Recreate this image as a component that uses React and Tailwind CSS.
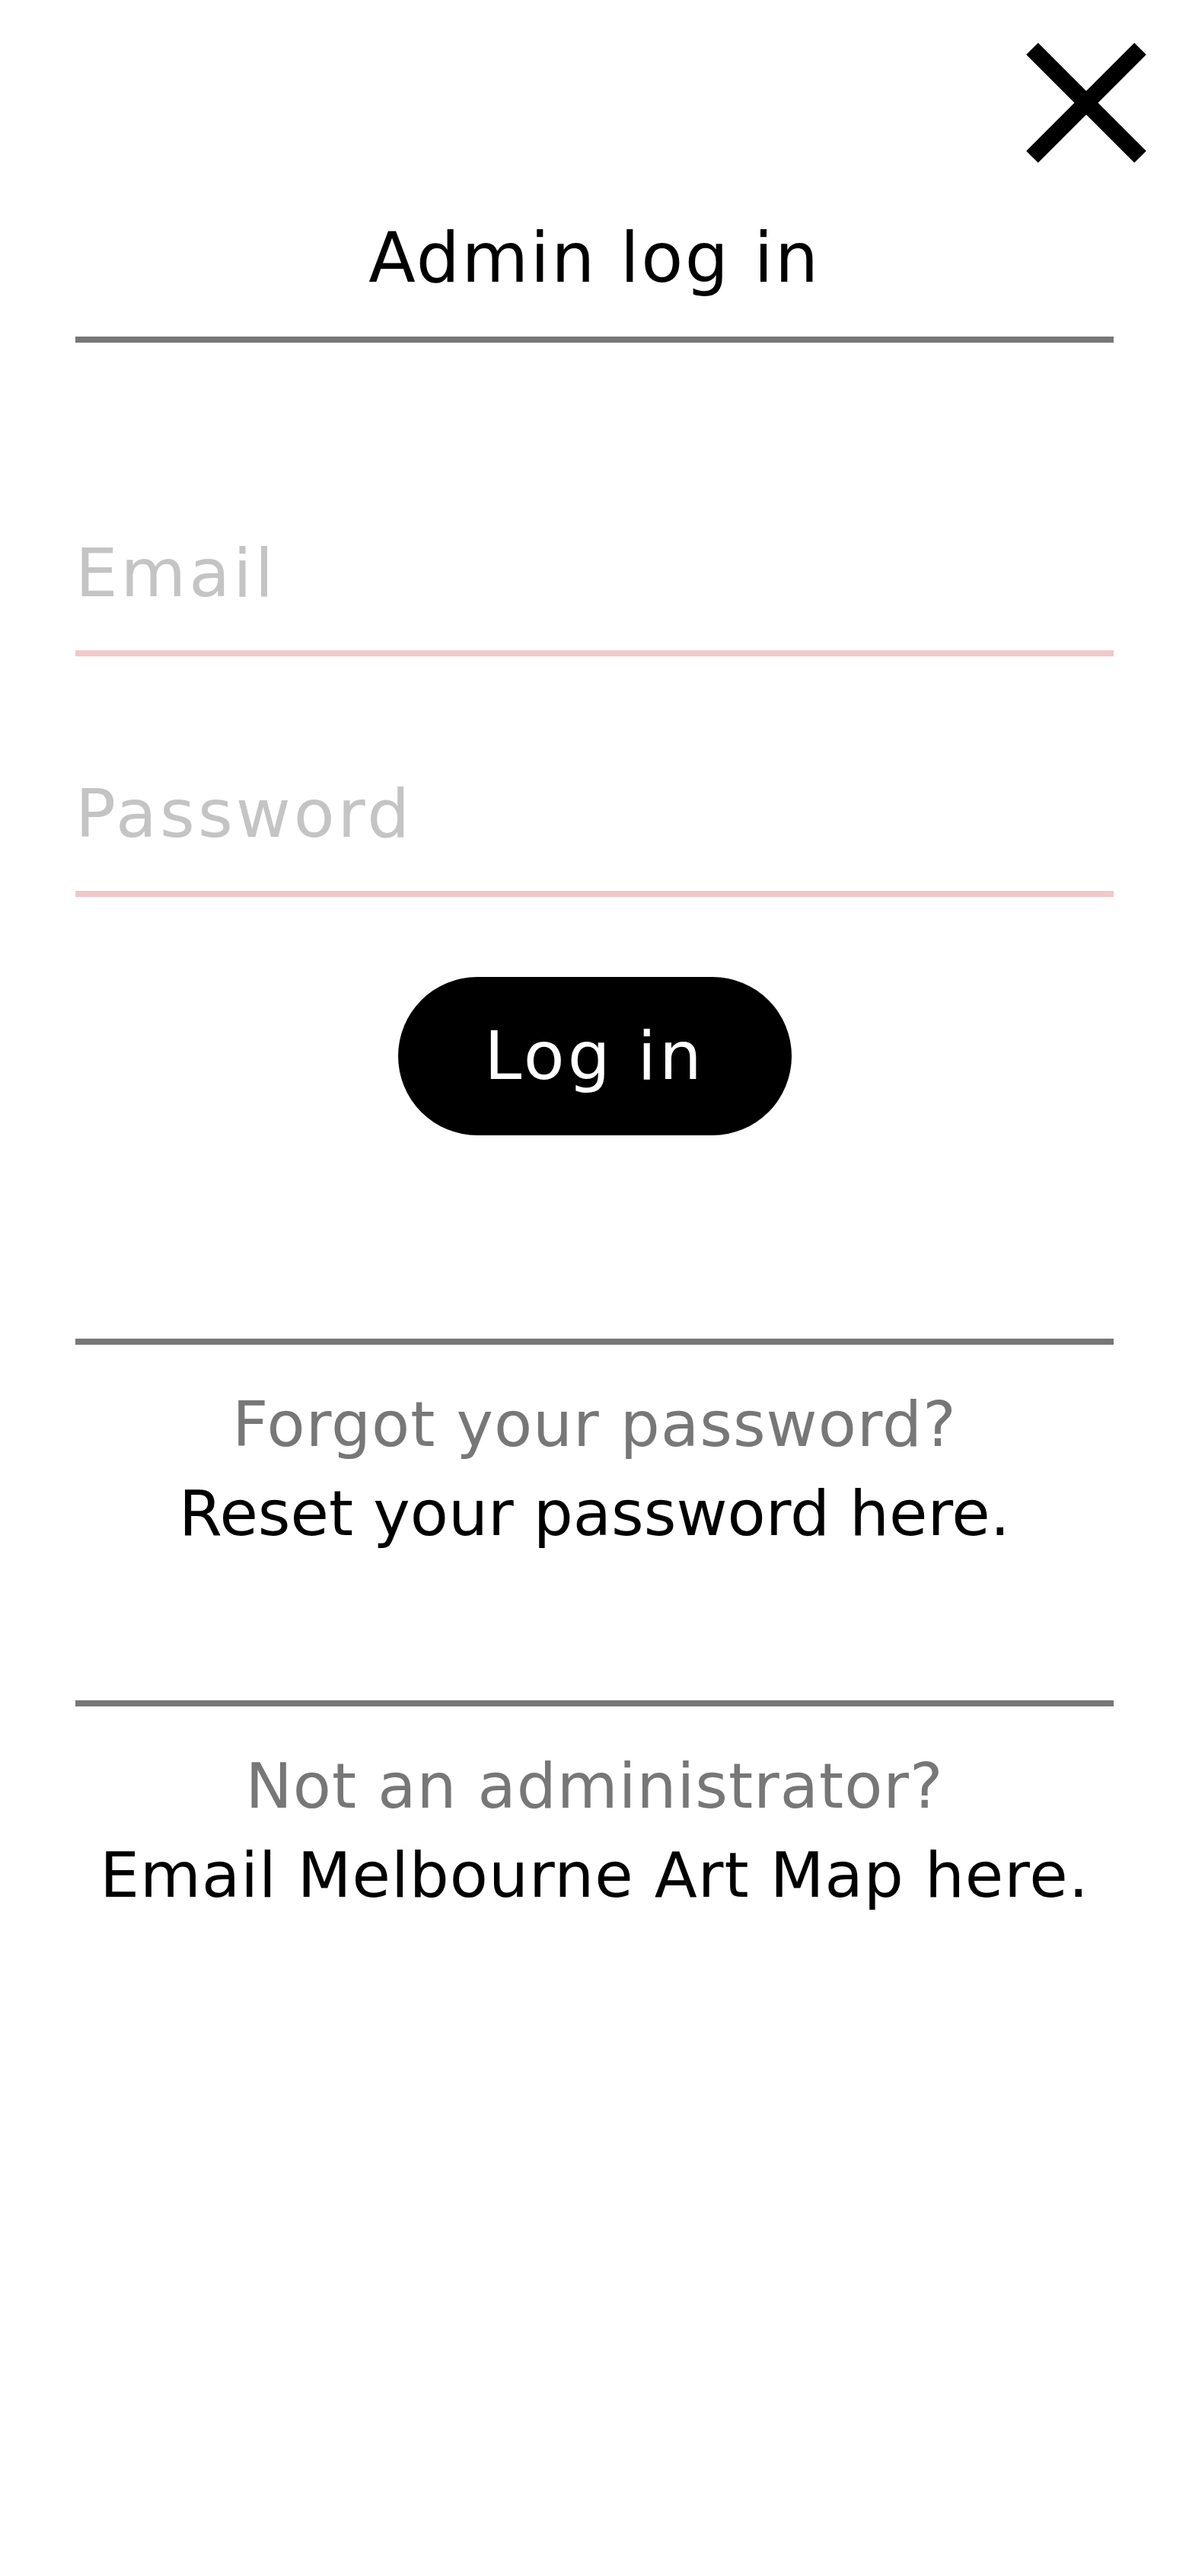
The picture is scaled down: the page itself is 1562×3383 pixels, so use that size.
import React, { useState } from "react";

function CloseIcon() {
  return (
    <svg width="158" height="158" viewBox="0 0 158 158" aria-hidden="true">
      <path d="M8 8 L150 150 M150 8 L8 150" stroke="#000" strokeWidth="22" strokeLinecap="butt" fill="none" />
    </svg>
  );
}

export default function App() {
  const [email, setEmail] = useState("");
  const [password, setPassword] = useState("");

  return (
    <div className="min-h-screen bg-white font-['DejaVu_Sans',sans-serif] text-black">
      <div className="flex justify-end pt-[56px] pr-[56px]">
        <button type="button" aria-label="Close" className="block">
          <CloseIcon />
        </button>
      </div>

      <div className="px-[99px]">
        <h1 className="mt-[71px] pb-[49px] border-b-[8px] border-[#777777] text-center text-[90px] leading-[108px] tracking-[2.5px] font-normal">
          Admin log in
        </h1>

        <form
          className="mt-[201px] flex flex-col gap-[105px]"
          onSubmit={(e) => e.preventDefault()}
        >
          <input
            type="email"
            value={email}
            onChange={(e) => setEmail(e.target.value)}
            placeholder="Email"
            className="block w-full h-[211px] p-0 border-0 border-b-[8px] border-[#f0c8c8] bg-transparent text-[88px] tracking-[4px] outline-none placeholder:text-[#c4c4c4]"
          />
          <input
            type="password"
            value={password}
            onChange={(e) => setPassword(e.target.value)}
            placeholder="Password"
            className="block w-full h-[211px] p-0 border-0 border-b-[8px] border-[#f0c8c8] bg-transparent text-[88px] tracking-[4px] outline-none placeholder:text-[#c4c4c4]"
          />
          <div className="flex justify-center">
            <button
              type="submit"
              className="w-[517px] h-[208px] rounded-full bg-black text-white text-[88px] tracking-[4px] flex items-center justify-center"
            >
              Log in
            </button>
          </div>
        </form>

        <div className="mt-[267px] h-[8px] bg-[#777777]" />
        <div className="pt-[46px] text-center text-[82px] leading-[117px] tracking-[1px]">
          <p className="text-[#777777]">Forgot your password?</p>
          <a href="#" className="block text-black tracking-[0px]">Reset your password here.</a>
        </div>

        <div className="mt-[187px] h-[8px] bg-[#777777]" />
        <div className="pt-[46px] text-center text-[82px] leading-[117px] tracking-[1px]">
          <p className="text-[#777777]">Not an administrator?</p>
          <a href="#" className="block text-black">Email Melbourne Art Map here.</a>
        </div>
      </div>
    </div>
  );
}
